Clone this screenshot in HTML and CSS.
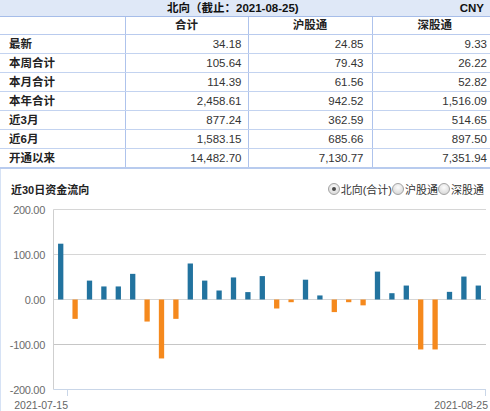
FILE: index.html
```html
<!DOCTYPE html>
<html lang="zh-CN">
<head>
<meta charset="utf-8">
<title>北向资金</title>
<link rel="stylesheet" href="styles.css">
</head>
<body>
<div class="page">
  <table class="flow">
    <colgroup><col class="c1"><col class="c2"><col class="c3"><col class="c4"></colgroup>
    <thead>
      <tr class="title-row"><th colspan="4"><div class="title-bar"><span>北向（截止：2021-08-25)</span><span>CNY</span></div></th></tr>
      <tr class="col-head"><th></th><th>合计</th><th>沪股通</th><th>深股通</th></tr>
    </thead>
    <tbody>
      <tr><th>最新</th><td>34.18</td><td>24.85</td><td>9.33</td></tr>
      <tr><th>本周合计</th><td>105.64</td><td>79.43</td><td>26.22</td></tr>
      <tr><th>本月合计</th><td>114.39</td><td>61.56</td><td>52.82</td></tr>
      <tr><th>本年合计</th><td>2,458.61</td><td>942.52</td><td>1,516.09</td></tr>
      <tr><th>近3月</th><td>877.24</td><td>362.59</td><td>514.65</td></tr>
      <tr><th>近6月</th><td>1,583.15</td><td>685.66</td><td>897.50</td></tr>
      <tr class="last"><th>开通以来</th><td>14,482.70</td><td>7,130.77</td><td>7,351.94</td></tr>
    </tbody>
  </table>
  <section class="chart">
    <div class="chart-head">
      <span class="chart-title">近30日资金流向</span>
      <div class="radios">
        <span class="radio on"></span><span class="rlabel">北向(合计)</span>
        <span class="radio"></span><span class="rlabel">沪股通</span>
        <span class="radio"></span><span class="rlabel">深股通</span>
      </div>
    </div>
    <svg class="plot" width="490" height="211" viewBox="0 0 490 211">
      <g class="grid">
        <line x1="53.5" y1="8.5" x2="486" y2="8.5"/>
        <line x1="53.5" y1="53.5" x2="486" y2="53.5"/>
        <line x1="53.5" y1="98.5" x2="486" y2="98.5"/>
        <line class="dark" x1="53.5" y1="143.5" x2="486" y2="143.5"/>
      </g>
      <line class="yaxis" x1="53.5" y1="8.5" x2="53.5" y2="188.5"/>
      <g class="xaxis">
        <line x1="53.5" y1="188.5" x2="486" y2="188.5"/>
        <line x1="67.5" y1="188.5" x2="67.5" y2="195"/>
        <line x1="485.5" y1="188.5" x2="485.5" y2="195"/>
      </g>
      <g class="ylabels">
        <text x="45" y="12.5">200.00</text>
        <text x="45" y="57.5">100.00</text>
        <text x="45" y="102.5">0.00</text>
        <text x="45" y="147.5">-100.00</text>
        <text x="45" y="192.5">-200.00</text>
      </g>
      <g class="xlabels">
        <text x="68" y="208">2021-07-15</text>
        <text x="488" y="208">2021-08-25</text>
      </g>
      <g class="pos">
        <rect x="58.05" y="42.7" width="5.3" height="55.8"/>
        <rect x="86.85" y="79.6" width="5.3" height="18.9"/>
        <rect x="101.25" y="85.45" width="5.3" height="13.05"/>
        <rect x="115.65" y="85.45" width="5.3" height="13.05"/>
        <rect x="130.05" y="72.85" width="5.3" height="25.65"/>
        <rect x="187.65" y="62.5" width="5.3" height="36"/>
        <rect x="202.05" y="79.6" width="5.3" height="18.9"/>
        <rect x="216.45" y="89.5" width="5.3" height="9"/>
        <rect x="230.85" y="76.45" width="5.3" height="22.05"/>
        <rect x="245.25" y="91.1" width="5.3" height="7.4"/>
        <rect x="259.65" y="75.1" width="5.3" height="23.4"/>
        <rect x="302.85" y="78.7" width="5.3" height="19.8"/>
        <rect x="317.25" y="94.45" width="5.3" height="4.05"/>
        <rect x="374.85" y="70.6" width="5.3" height="27.9"/>
        <rect x="389.25" y="92.2" width="5.3" height="6.3"/>
        <rect x="403.65" y="84.55" width="5.3" height="13.95"/>
        <rect x="446.85" y="90.85" width="5.3" height="7.65"/>
        <rect x="461.25" y="75.55" width="5.3" height="22.95"/>
        <rect x="475.65" y="84.55" width="5.3" height="13.95"/>
      </g>
      <g class="neg">
        <rect x="72.45" y="98.5" width="5.3" height="19.35"/>
        <rect x="144.45" y="98.5" width="5.3" height="22.05"/>
        <rect x="158.85" y="98.5" width="5.3" height="58.95"/>
        <rect x="173.25" y="98.5" width="5.3" height="19.35"/>
        <rect x="274.05" y="98.5" width="5.3" height="9"/>
        <rect x="288.45" y="98.5" width="5.3" height="2.7"/>
        <rect x="331.65" y="98.5" width="5.3" height="12.6"/>
        <rect x="346.05" y="98.5" width="5.3" height="2.7"/>
        <rect x="360.45" y="98.5" width="5.3" height="5.85"/>
        <rect x="418.05" y="98.5" width="5.3" height="49.95"/>
        <rect x="432.45" y="98.5" width="5.3" height="49.95"/>
      </g>
    </svg>
  </section>
</div>
</body>
</html>
```
FILE: styles.css
```css
html, body {
  margin: 0;
  padding: 0;
  background: #fff;
  overflow: hidden;
}
body {
  font-family: "Liberation Sans", "Noto Sans CJK SC", sans-serif;
  color: #333;
}
.page {
  width: 490px;
  height: 411px;
  overflow: hidden;
}
.flow {
  border-collapse: collapse;
  table-layout: fixed;
  width: 497px;
  font-size: 11.5px;
}
.c1 { width: 125px; }
.c2 { width: 123px; }
.c3 { width: 124px; }
.c4 { width: 125px; }

.title-row th {
  background: #dfe8f7;
  height: 16px;
  padding: 0;
  border-bottom: 1px solid #a6bde9;
}
.title-bar {
  display: flex;
  justify-content: space-between;
  padding: 0 13px 0 167px;
  font-weight: bold;
  color: #111;
  line-height: 16px;
}
.col-head th {
  height: 17px;
  padding: 0;
  line-height: 17px;
  text-align: center;
  font-weight: bold;
  color: #222;
  border-bottom: 1px solid #b9cbee;
}
.col-head th + th,
.flow td {
  border-left: 1px solid #aec3ec;
}
.flow tbody th,
.flow td {
  height: 18px;
  padding: 0;
  line-height: 18px;
  border-bottom: 1px solid #c3d3f0;
}
.flow tbody th {
  text-align: left;
  padding-left: 9px;
  font-weight: bold;
  color: #222;
}
.flow td {
  text-align: right;
  color: #333;
}
.flow td:nth-child(2) { padding-right: 6px; }
.flow td:nth-child(3) { padding-right: 8px; }
.flow td:nth-child(4) { padding-right: 10px; }
.flow tr.last th,
.flow tr.last td {
  border-bottom: 2px solid #b8cbee;
}

.chart {
  height: 243px;
  box-shadow: inset 1px 0 #d6e2f5;
}
.chart-head {
  display: flex;
  justify-content: space-between;
  align-items: center;
  height: 14px;
  padding: 13px 6px 5px 11px;
}
.chart-title {
  font-size: 11px;
  font-weight: bold;
  color: #222;
}
.radios {
  display: flex;
  align-items: center;
  font-size: 11px;
  color: #333;
}
.radio {
  width: 10px;
  height: 10px;
  border: 1px solid #a3a3a3;
  border-radius: 50%;
  background: radial-gradient(circle at 50% 35%, #fdfdfd 0%, #e2e2e2 60%, #cfcfcf 100%);
  display: flex;
  align-items: center;
  justify-content: center;
}
.radio.on::after {
  content: "";
  width: 4px;
  height: 4px;
  border-radius: 50%;
  background: #4a4a4a;
}
.rlabel {
  margin-left: 1px;
}
.plot {
  display: block;
}
.grid line {
  stroke: #d6d6d6;
  stroke-width: 1;
}
.grid line.dark {
  stroke: #c6c6c6;
}
.yaxis {
  stroke: #cfcfcf;
  stroke-width: 1;
}
.xaxis line {
  stroke: #c9d6e8;
  stroke-width: 1;
}
.ylabels text {
  font-family: "Liberation Sans", sans-serif;
  font-size: 11px;
  letter-spacing: -0.3px;
  fill: #6b6b6b;
  text-anchor: end;
}
.xlabels text {
  font-family: "Liberation Sans", sans-serif;
  font-size: 10.5px;
  fill: #666;
  text-anchor: end;
}
.pos rect { fill: #22739f; }
.neg rect { fill: #f5891d; }
```
